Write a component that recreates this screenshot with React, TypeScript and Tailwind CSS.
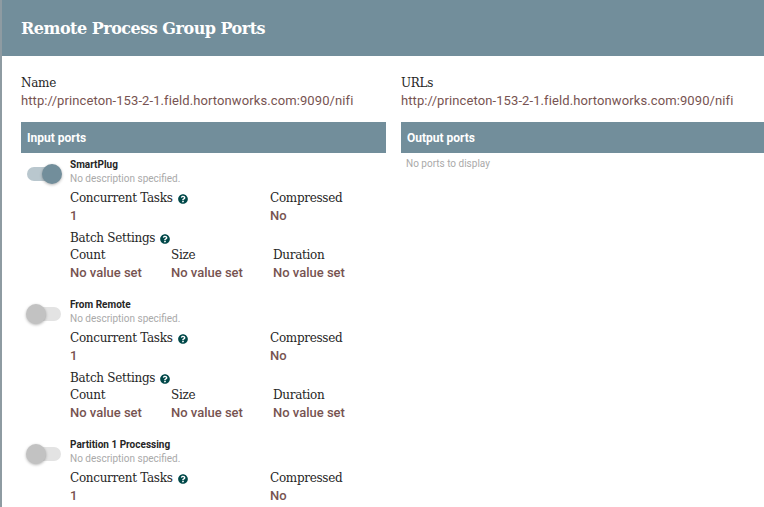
import React from "react";
import { FaQuestionCircle } from "react-icons/fa";

const slab = "font-['DejaVu_Serif',serif]";
const roboto = "font-['Roboto',sans-serif]";

type Port = { name: string; enabled: boolean; batch: boolean };

const ports: Port[] = [
  { name: "SmartPlug", enabled: true, batch: true },
  { name: "From Remote", enabled: false, batch: true },
  { name: "Partition 1 Processing", enabled: false, batch: false },
];

function Help() {
  return <FaQuestionCircle className="ml-[5px] inline-block h-[10px] w-[10px] text-[#004849]" />;
}

function Label({ children, help }: { children: React.ReactNode; help?: boolean }) {
  return (
    <div className={`${slab} flex items-center text-[12px] leading-[17px] tracking-[-0.3px] text-[#262626]`}>
      {children}
      {help && <Help />}
    </div>
  );
}

function Value({ children }: { children: React.ReactNode }) {
  return <div className={`${roboto} text-[13px] font-medium leading-[17px] text-[#775351]`}>{children}</div>;
}

function Toggle({ on }: { on: boolean }) {
  return (
    <div className="relative h-[20px] w-[36px]">
      <div
        className={`absolute left-[1px] top-[3px] h-[14px] w-[34px] rounded-full ${on ? "bg-[#b9c7ce]" : "bg-[#e3e3e3]"}`}
      />
      <div
        className={`absolute top-0 h-[20px] w-[20px] rounded-full shadow-[0_1px_3px_rgba(0,0,0,0.3)] ${
          on ? "left-[16px] bg-[#728e9b]" : "left-0 bg-[#c2c2c2]"
        }`}
      />
    </div>
  );
}

function PortRow({ port }: { port: Port }) {
  return (
    <div className="flex pb-[12px] pt-[5px]">
      <div className="w-[44px] pt-[6px]">
        <Toggle on={port.enabled} />
      </div>
      <div className="flex-1">
        <div className={`${roboto} text-[10px] font-bold leading-[14px] text-[#262626]`}>{port.name}</div>
        <div className={`${roboto} text-[10px] leading-[14px] text-[#aaaaaa]`}>No description specified.</div>
        <div className="mt-[4px] grid grid-cols-[200px_1fr]">
          <div>
            <Label help>Concurrent Tasks</Label>
            <Value>1</Value>
          </div>
          <div>
            <Label>Compressed</Label>
            <Value>No</Value>
          </div>
        </div>
        {port.batch && (
          <div className="mt-[6px]">
            <Label help>Batch Settings</Label>
            <div className="grid grid-cols-[101px_102px_1fr]">
              <div>
                <Label>Count</Label>
                <Value>No value set</Value>
              </div>
              <div>
                <Label>Size</Label>
                <Value>No value set</Value>
              </div>
              <div>
                <Label>Duration</Label>
                <Value>No value set</Value>
              </div>
            </div>
          </div>
        )}
      </div>
    </div>
  );
}

function Bar({ title }: { title: string }) {
  return (
    <div className={`${roboto} flex h-[31px] items-center bg-[#728e9b] px-[6px] text-[12px] font-bold text-white`}>
      {title}
    </div>
  );
}

export default function App() {
  const url = "http://princeton-153-2-1.field.hortonworks.com:9090/nifi";
  return (
    <div className="flex h-[507px] w-[764px] overflow-hidden bg-white">
      <div className="w-[2px] shrink-0 bg-[#8e9ba2]" />
      <div className="flex-1">
        <div className="flex h-[56px] items-center bg-[#728e9b] pl-[19px] pt-[2px]">
          <h1 className={`${slab} text-[16px] font-bold tracking-[-0.5px] text-white`}>Remote Process Group Ports</h1>
        </div>
        <div className="grid grid-cols-[365px_365px] gap-x-[15px] pl-[19px] pt-[19px]">
          <div>
            <Label>Name</Label>
            <div className={`${roboto} text-[13px] leading-[17px] tracking-[0.1px] text-[#775351]`}>{url}</div>
          </div>
          <div>
            <Label>URLs</Label>
            <div className={`${roboto} text-[13px] leading-[17px] tracking-[0.1px] text-[#775351]`}>{url}</div>
          </div>
          <div className="mt-[13px]">
            <Bar title="Input ports" />
            <div className="pl-[5px]">
              {ports.map((p) => (
                <PortRow key={p.name} port={p} />
              ))}
            </div>
          </div>
          <div className="mt-[13px]">
            <Bar title="Output ports" />
            <div className={`${roboto} px-[5px] pt-[4px] text-[10px] leading-[14px] text-[#aaaaaa]`}>
              No ports to display
            </div>
          </div>
        </div>
      </div>
    </div>
  );
}
